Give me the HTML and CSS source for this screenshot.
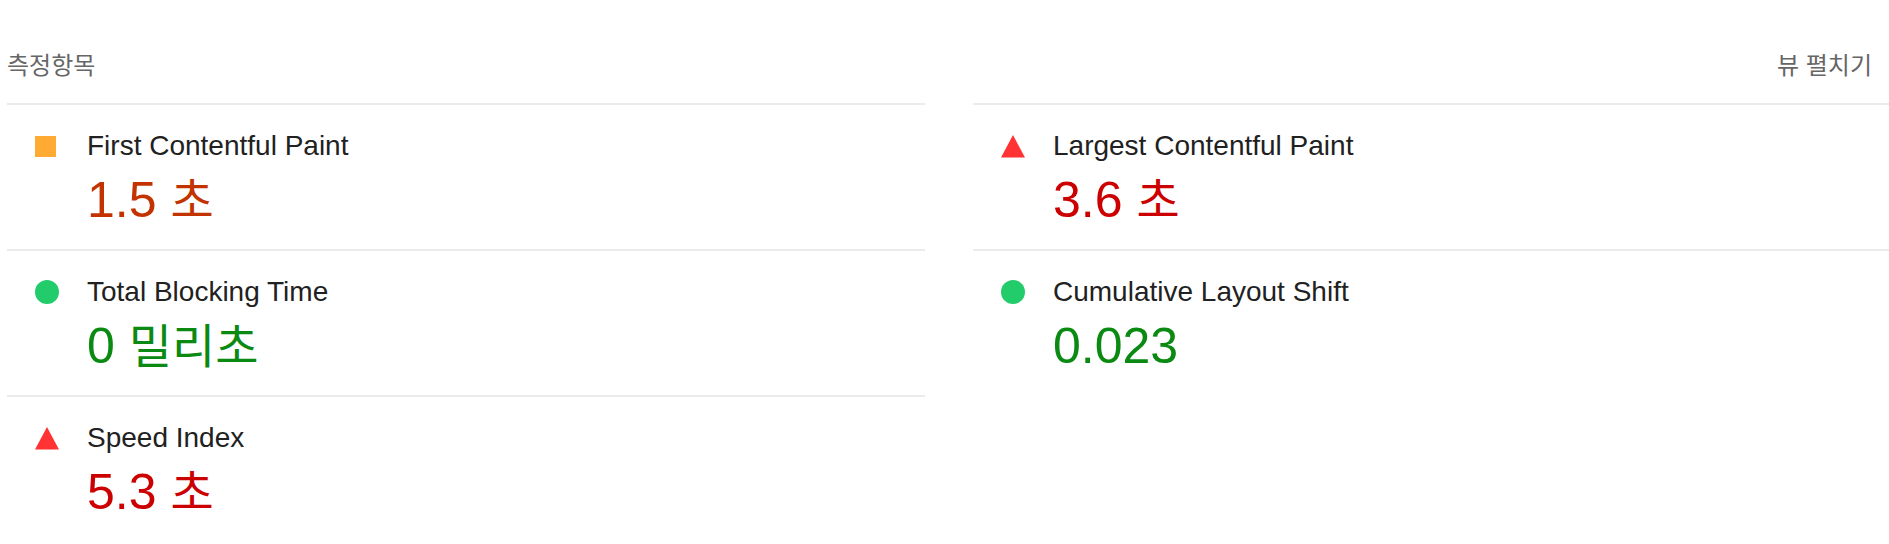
FILE: index.html
```html
<!DOCTYPE html>
<html lang="ko">
<head>
<meta charset="utf-8">
<title>측정항목</title>
<link rel="stylesheet" href="styles.css">
</head>
<body>
<section class="metrics">
  <div class="metrics-header">
    <span class="metrics-title">측정항목</span>
    <span class="metrics-toggle">뷰 펼치기</span>
  </div>
  <div class="metrics-grid">
    <div class="metric">
      <span class="icon icon-average"></span>
      <span class="metric-title">First Contentful Paint</span>
      <span class="metric-value value-average">1.5 <span class="unit">초</span></span>
    </div>
    <div class="metric">
      <span class="icon"><svg class="tri" viewBox="0 0 24 24" width="24" height="24"><polygon points="0,23.5 12,1 24,23.5" fill="#ff3333"/></svg></span>
      <span class="metric-title">Largest Contentful Paint</span>
      <span class="metric-value value-fail">3.6 <span class="unit">초</span></span>
    </div>
    <div class="metric">
      <span class="icon icon-pass"></span>
      <span class="metric-title">Total Blocking Time</span>
      <span class="metric-value value-pass">0 <span class="unit">밀리초</span></span>
    </div>
    <div class="metric">
      <span class="icon icon-pass"></span>
      <span class="metric-title">Cumulative Layout Shift</span>
      <span class="metric-value value-pass">0.023</span>
    </div>
    <div class="metric">
      <span class="icon"><svg class="tri" viewBox="0 0 24 24" width="24" height="24"><polygon points="0,23.5 12,1 24,23.5" fill="#ff3333"/></svg></span>
      <span class="metric-title">Speed Index</span>
      <span class="metric-value value-fail">5.3 <span class="unit">초</span></span>
    </div>
  </div>
</section>
</body>
</html>
```

FILE: styles.css
```css
html, body {
  margin: 0;
  padding: 0;
  background: #ffffff;
  overflow: hidden;
}

body {
  font-family: "Liberation Sans", "Noto Sans CJK KR", Arial, sans-serif;
  color: #212121;
}

.metrics {
  margin-left: 7px;
  width: 1884px;
  padding-top: 49px;
}

.metrics-header {
  display: flex;
  justify-content: space-between;
  align-items: center;
  height: 30px;
  padding-right: 19px;
  margin-bottom: 24px;
  font-family: "Noto Sans CJK KR", "Liberation Sans", sans-serif;
  font-size: 24px;
  line-height: 30px;
  color: #666666;
}

.metrics-grid {
  display: grid;
  grid-template-columns: 1fr 1fr;
  column-gap: 48px;
}

.metric {
  display: grid;
  grid-template-columns: 24px 1fr;
  grid-template-rows: 36px 60px;
  column-gap: 28px;
  row-gap: 6px;
  align-items: center;
  border-top: 2px solid #ebebeb;
  padding: 23px 0 19px 28px;
}

.icon {
  width: 24px;
  height: 24px;
  display: flex;
  align-items: center;
  justify-content: flex-start;
}

.icon-average::before {
  content: "";
  display: block;
  width: 21px;
  height: 21px;
  background: #ffaa33;
}

.icon-pass::before {
  content: "";
  display: block;
  width: 24px;
  height: 24px;
  border-radius: 50%;
  background: #22cc6a;
}

.tri {
  display: block;
}

.metric-title {
  font-size: 28px;
  line-height: 36px;
  color: #212121;
  white-space: nowrap;
}

.metric-value {
  grid-column: 2;
  font-size: 50px;
  line-height: 60px;
  height: 60px;
  white-space: nowrap;
}

.unit {
  font-size: 47px;
  line-height: 1;
}

.value-average { color: #c33300; }
.value-fail { color: #cc0000; }
.value-pass { color: #0a8a12; }
```
